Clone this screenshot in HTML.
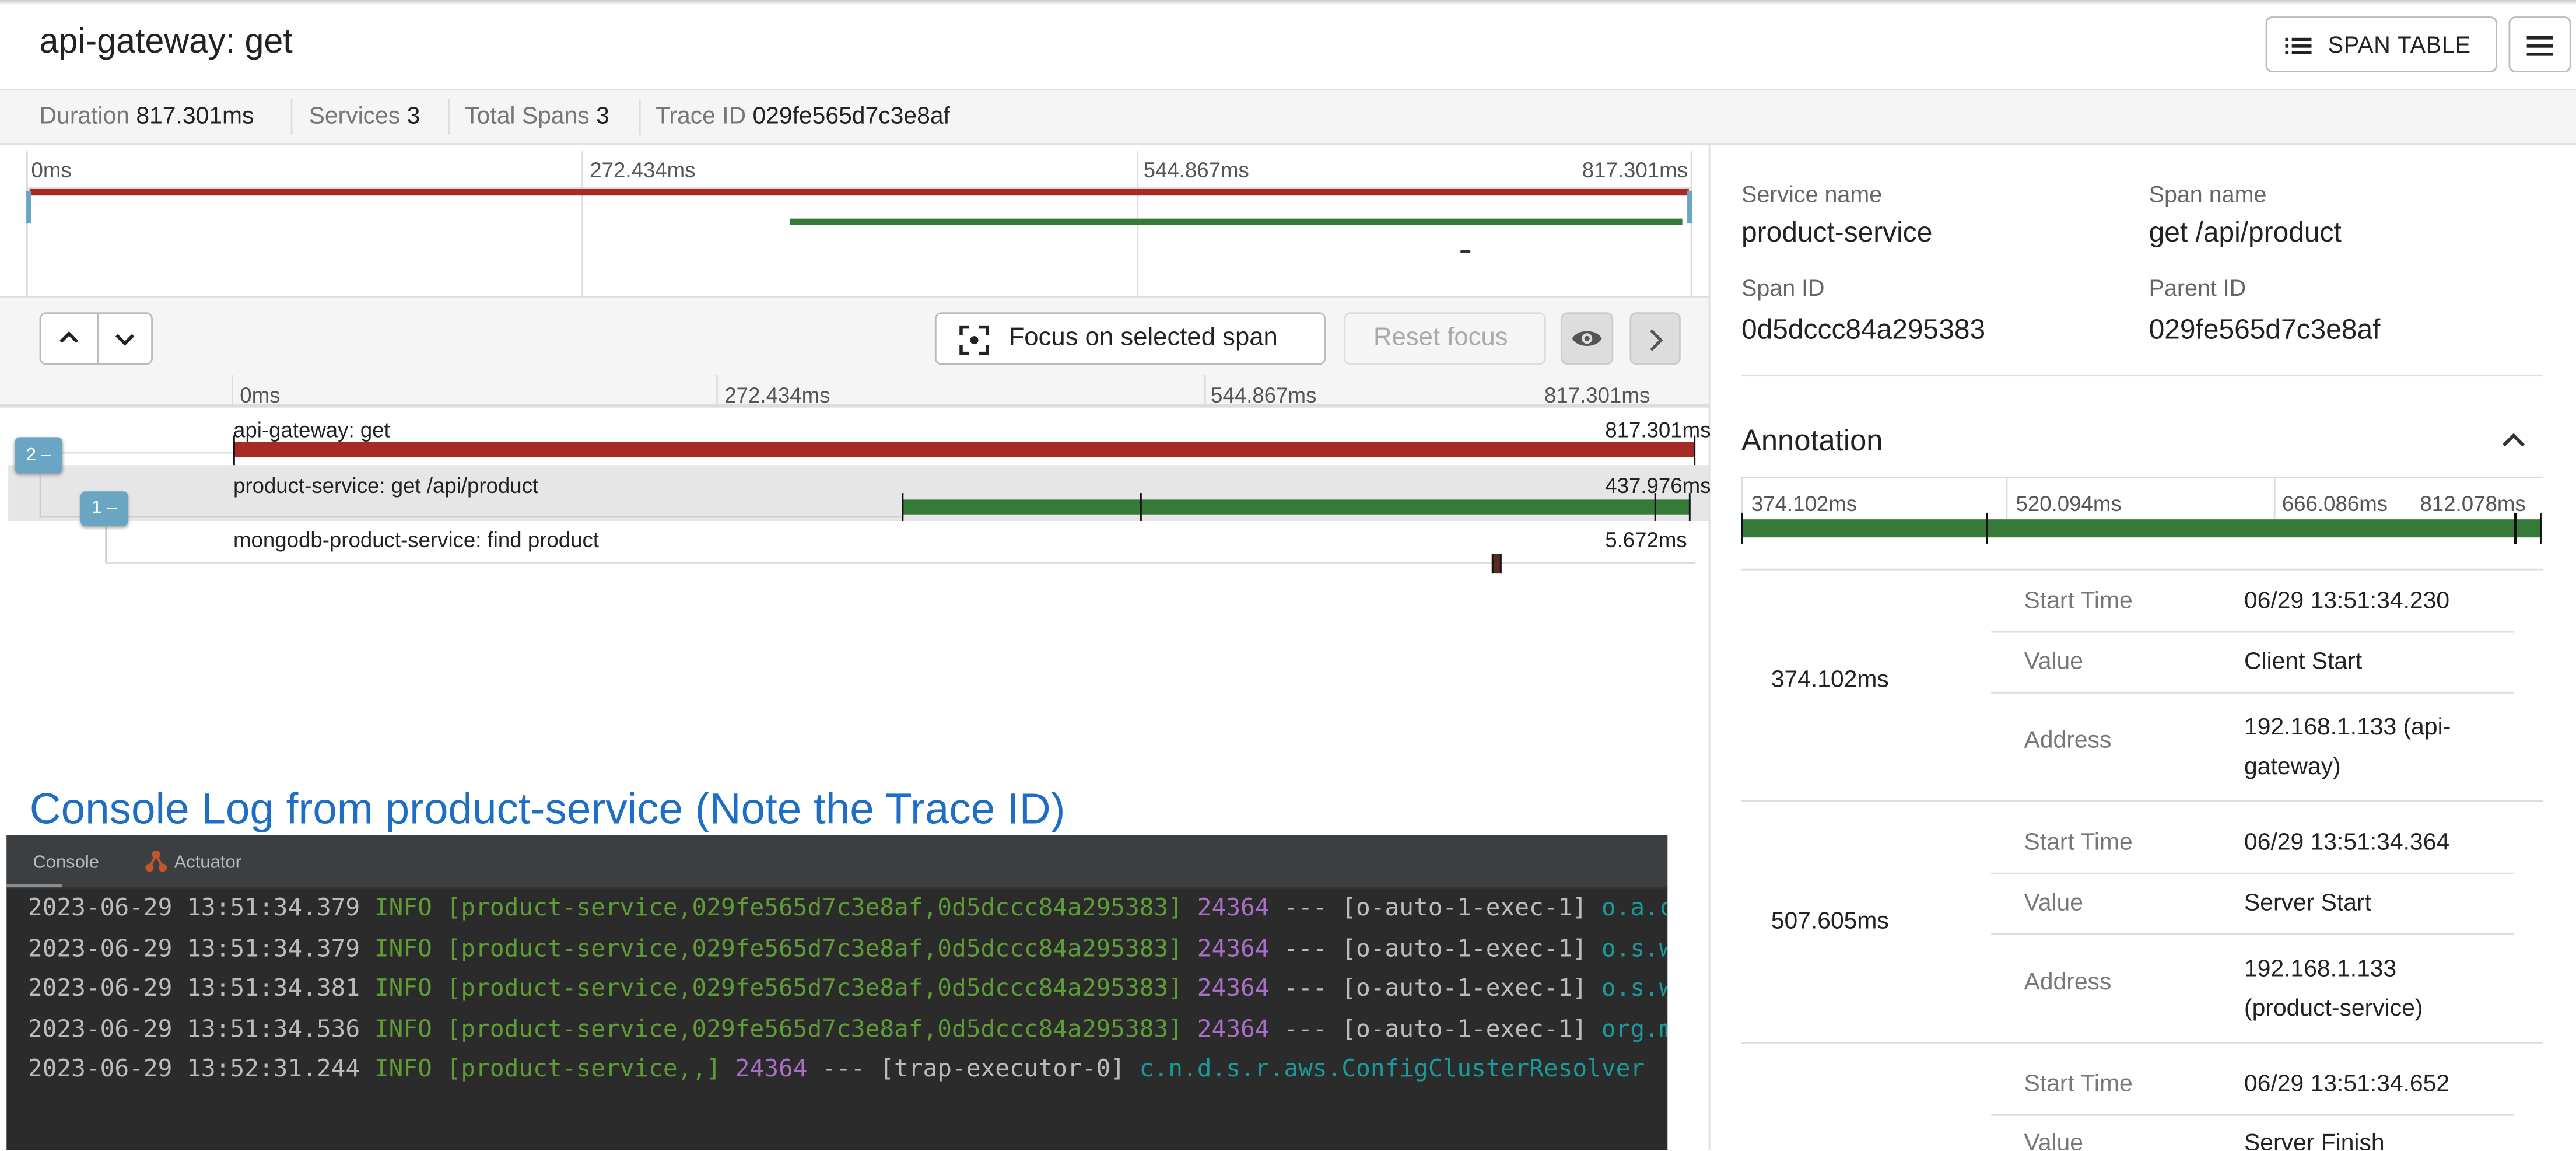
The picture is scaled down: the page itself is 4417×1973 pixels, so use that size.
<!DOCTYPE html>
<html><head><meta charset="utf-8"><style>
html,body{margin:0;padding:0;width:4417px;height:1973px;overflow:hidden;background:#fff}
#s{position:absolute;left:0;top:0;width:1568px;height:700px;transform:scale(2.8170);transform-origin:0 0;font-family:"Liberation Sans",sans-serif;color:#222;overflow:hidden}
.a{position:absolute;white-space:nowrap}
.g{color:#777}
.btn{position:absolute;border:1px solid #bbb;border-radius:4px;background:#fff;box-sizing:border-box}
.mono{font-family:"DejaVu Sans Mono","Liberation Mono",monospace;font-size:14.6px;white-space:pre}
</style></head><body><div id="s">
<div class="a" style="left:0;top:0;width:1568px;height:3px;background:linear-gradient(#ccc,#fff)"></div>
<div class="a" style="left:24px;top:14px;font-size:21px">api-gateway: get</div>
<div class="btn" style="left:1379px;top:10px;width:141px;height:34px;font-size:14px;letter-spacing:.3px">
 <svg class="a" style="left:11px;top:11px" width="16" height="12"><g fill="#222"><rect x="0" y="1" width="2" height="2"/><rect x="4" y="1" width="12" height="2"/><rect x="0" y="5" width="2" height="2"/><rect x="4" y="5" width="12" height="2"/><rect x="0" y="9" width="2" height="2"/><rect x="4" y="9" width="12" height="2"/></g></svg>
 <span class="a" style="left:37px;top:8px">SPAN TABLE</span></div>
<div class="btn" style="left:1527px;top:10px;width:38px;height:34px">
 <svg class="a" style="left:10px;top:10px" width="16" height="13"><g fill="#222"><rect y="1" width="16" height="2"/><rect y="6" width="16" height="2"/><rect y="11" width="16" height="2"/></g></svg></div>
<div class="a" style="left:0;top:54px;width:1568px;height:34px;background:#f5f5f5;border-top:1px solid #ddd;border-bottom:1px solid #ddd;box-sizing:border-box;font-size:14.5px">
 <span class="a" style="left:24px;top:8px"><span class="g">Duration</span> 817.301ms</span>
 <div class="a" style="left:177px;top:5px;height:22px;border-left:1px solid #ddd"></div>
 <span class="a" style="left:188px;top:8px"><span class="g">Services</span> 3</span>
 <div class="a" style="left:273px;top:5px;height:22px;border-left:1px solid #ddd"></div>
 <span class="a" style="left:283px;top:8px"><span class="g">Total Spans</span> 3</span>
 <div class="a" style="left:389px;top:5px;height:22px;border-left:1px solid #ddd"></div>
 <span class="a" style="left:399px;top:8px"><span class="g">Trace ID</span> 029fe565d7c3e8af</span>
</div>
<div class="a" style="left:1040px;top:88px;width:1px;height:612px;background:#ddd"></div>
<div class="a" style="left:16px;top:92px;width:1014px;height:88px;font-size:13px;color:#555">
 <span class="a" style="left:3px;top:4px">0ms</span><span class="a" style="left:343px;top:4px">272.434ms</span><span class="a" style="left:680px;top:4px">544.867ms</span><span class="a" style="left:947px;top:4px">817.301ms</span>
 <div class="a" style="left:0;top:0;width:1px;height:88px;background:#ddd"></div>
 <div class="a" style="left:338px;top:0;width:1px;height:88px;background:#ddd"></div>
 <div class="a" style="left:676px;top:0;width:1px;height:88px;background:#ddd"></div>
 <div class="a" style="left:1013px;top:0;width:1px;height:88px;background:#ddd"></div>
 <div class="a" style="left:0;top:22px;width:1014px;height:1px;background:#ddd"></div>
 <div class="a" style="left:2px;top:23px;width:1010px;height:4px;background:#a62b26"></div>
 <div class="a" style="left:465px;top:41px;width:543px;height:4px;background:#357a38"></div>
 <div class="a" style="left:873px;top:60px;width:6px;height:2px;background:#333"></div>
 <div class="a" style="left:0;top:24px;width:3px;height:20px;background:#6aa5c4"></div>
 <div class="a" style="left:1011px;top:24px;width:3px;height:20px;background:#6aa5c4"></div>
</div>
<div class="a" style="left:0;top:180px;width:1040px;height:68px;background:#f5f5f5;border-top:1px solid #ddd;border-bottom:2px solid #ddd;box-sizing:border-box"></div>
<div class="btn" style="left:24px;top:190px;width:69px;height:32px">
 <div class="a" style="left:34px;top:0;width:1px;height:30px;background:#bbb"></div>
 <svg class="a" style="left:11px;top:10px" width="12" height="10"><path d="M1 7 L6 2 L11 7" stroke="#222" stroke-width="2" fill="none"/></svg>
 <svg class="a" style="left:45px;top:10px" width="12" height="10"><path d="M1 3 L6 8 L11 3" stroke="#222" stroke-width="2" fill="none"/></svg></div>
<div class="btn" style="left:569px;top:190px;width:238px;height:32px;font-size:15.5px">
 <svg class="a" style="left:14px;top:7px" width="18" height="18"><g stroke="#222" stroke-width="2" fill="none"><path d="M1 6V1H6M12 1H17V6M17 12V17H12M6 17H1V12"/></g><circle cx="9" cy="9" r="2.5" fill="#222"/></svg>
 <span class="a" style="left:44px;top:6px">Focus on selected span</span></div>
<div class="btn" style="left:818px;top:190px;width:123px;height:32px;border-color:#ddd;background:#f5f5f5;color:#aaa;font-size:15.5px"><span class="a" style="left:17px;top:6px">Reset focus</span></div>
<div class="btn" style="left:950px;top:190px;width:32px;height:32px;background:#ddd;border-color:#ccc">
 <svg class="a" style="left:5px;top:8px" width="20" height="14"><path d="M1 7C4 1 16 1 19 7C16 13 4 13 1 7Z" fill="#555"/><circle cx="10" cy="7" r="3.2" fill="#ddd"/><circle cx="10" cy="7" r="1.6" fill="#555"/></svg></div>
<div class="btn" style="left:992px;top:190px;width:31px;height:32px;background:#ddd;border-color:#ccc">
 <svg class="a" style="left:10px;top:9px" width="10" height="14"><path d="M2 1L8 7L2 13" stroke="#555" stroke-width="1.8" fill="none"/></svg></div>
<div class="a" style="left:0;top:228px;width:1040px;font-size:13px;color:#555">
 <span class="a" style="left:146px;top:5px">0ms</span><span class="a" style="left:441px;top:5px">272.434ms</span><span class="a" style="left:737px;top:5px">544.867ms</span><span class="a" style="left:940px;top:5px">817.301ms</span>
 <div class="a" style="left:141px;top:0;width:1px;height:20px;background:#ddd"></div><div class="a" style="left:436px;top:0;width:1px;height:20px;background:#ddd"></div><div class="a" style="left:733px;top:0;width:1px;height:20px;background:#ddd"></div>
</div>
<div class="a" style="left:5px;top:283px;width:1035px;height:34px;background:#e6e6e6"></div>
<div class="a" style="left:20px;top:275px;width:122px;height:1px;background:#ddd"></div>
<div class="a" style="left:24px;top:285px;width:1px;height:30px;background:#ccc"></div>
<div class="a" style="left:24px;top:314px;width:525px;height:1px;background:#ccc"></div>
<div class="a" style="left:64px;top:318px;width:1px;height:25px;background:#ccc"></div>
<div class="a" style="left:64px;top:342px;width:968px;height:1px;background:#ddd"></div>
<div class="a" style="left:142px;top:254px;font-size:13px">api-gateway: get</div>
<div class="a" style="left:977px;top:254px;font-size:13px">817.301ms</div>
<div class="a" style="left:142px;top:269px;width:889px;height:9px;background:#a62b26"></div>
<div class="a" style="left:142px;top:265px;width:1px;height:18px;background:#111"></div>
<div class="a" style="left:1031px;top:265px;width:1px;height:18px;background:#111"></div>
<div class="a" style="left:142px;top:288px;font-size:13px">product-service: get /api/product</div>
<div class="a" style="left:977px;top:288px;font-size:13px">437.976ms</div>
<div class="a" style="left:549px;top:304px;width:480px;height:9px;background:#357a38"></div>
<div class="a" style="left:549px;top:300px;width:1px;height:17px;background:#111"></div>
<div class="a" style="left:694px;top:300px;width:1px;height:17px;background:#111"></div>
<div class="a" style="left:1007px;top:300px;width:1px;height:17px;background:#111"></div>
<div class="a" style="left:1028px;top:300px;width:1px;height:17px;background:#111"></div>
<div class="a" style="left:142px;top:321px;font-size:13px">mongodb-product-service: find product</div>
<div class="a" style="left:977px;top:321px;font-size:13px">5.672ms</div>
<div class="a" style="left:908px;top:337px;width:6px;height:12px;background:#5a2a20;border-left:1px solid #111;border-right:1px solid #111;box-sizing:border-box"></div>
<div class="a" style="left:9px;top:266px;width:29px;height:22px;background:#6aa5c4;border-radius:3px;color:#fff;font-size:11px;text-align:center;line-height:22px;box-shadow:0 1px 2px #999">2 –</div>
<div class="a" style="left:49px;top:299px;width:29px;height:21px;background:#6aa5c4;border-radius:3px;color:#fff;font-size:11px;text-align:center;line-height:21px;box-shadow:0 1px 2px #999">1 –</div>
<div class="a" style="left:18px;top:477px;font-size:26.5px;color:#1e6ec6">Console Log from product-service (Note the Trace ID)</div>
<div class="a" style="left:4px;top:508px;width:1011px;height:192px;background:#2b2b2b;overflow:hidden">
 <div class="a" style="left:0;top:0;width:1011px;height:32px;background:#3c3f41;border-bottom:1px solid #333"></div>
 <div class="a" style="left:0;top:30px;width:34px;height:2px;background:#8a8d90"></div>
 <span class="a" style="left:16px;top:11px;font-size:11px;color:#bbb">Console</span>
 <svg class="a" style="left:84px;top:9px" width="14" height="14"><g fill="#c0562a"><circle cx="7" cy="3" r="2.5"/><circle cx="3" cy="11" r="2.5"/><circle cx="11" cy="11" r="2.5"/></g><path d="M7 3L3 11M7 3L11 11" stroke="#c0562a" stroke-width="1.5"/></svg>
 <span class="a" style="left:102px;top:11px;font-size:11px;color:#bbb">Actuator</span>
 <div class="a mono" style="left:13px;top:33px;line-height:24.5px;color:#bbb"><div>2023-06-29 13:51:34.379 <span style="color:#5e9c35">INFO [product-service,029fe565d7c3e8af,0d5dccc84a295383]</span> <span style="color:#a96ec6">24364</span> --- [o-auto-1-exec-1] <span style="color:#1a9a9a">o.a.c</span></div><div>2023-06-29 13:51:34.379 <span style="color:#5e9c35">INFO [product-service,029fe565d7c3e8af,0d5dccc84a295383]</span> <span style="color:#a96ec6">24364</span> --- [o-auto-1-exec-1] <span style="color:#1a9a9a">o.s.w</span></div><div>2023-06-29 13:51:34.381 <span style="color:#5e9c35">INFO [product-service,029fe565d7c3e8af,0d5dccc84a295383]</span> <span style="color:#a96ec6">24364</span> --- [o-auto-1-exec-1] <span style="color:#1a9a9a">o.s.w</span></div><div>2023-06-29 13:51:34.536 <span style="color:#5e9c35">INFO [product-service,029fe565d7c3e8af,0d5dccc84a295383]</span> <span style="color:#a96ec6">24364</span> --- [o-auto-1-exec-1] <span style="color:#1a9a9a">org.m</span></div><div>2023-06-29 13:52:31.244 <span style="color:#5e9c35">INFO [product-service,,]</span> <span style="color:#a96ec6">24364</span> --- [trap-executor-0] <span style="color:#1a9a9a">c.n.d.s.r.aws.ConfigClusterResolver</span></div></div>
</div>
<div class="a" style="left:1060px;top:110px;font-size:14px;color:#666">Service name</div>
<div class="a" style="left:1308px;top:110px;font-size:14px;color:#666">Span name</div>
<div class="a" style="left:1060px;top:132px;font-size:17px">product-service</div>
<div class="a" style="left:1308px;top:132px;font-size:17px">get /api/product</div>
<div class="a" style="left:1060px;top:167px;font-size:14px;color:#666">Span ID</div>
<div class="a" style="left:1308px;top:167px;font-size:14px;color:#666">Parent ID</div>
<div class="a" style="left:1060px;top:191px;font-size:17px">0d5dccc84a295383</div>
<div class="a" style="left:1308px;top:191px;font-size:17px">029fe565d7c3e8af</div>
<div class="a" style="left:1060px;top:228px;width:488px;height:1px;background:#ddd"></div>
<div class="a" style="left:1060px;top:258px;font-size:18px">Annotation</div>
<svg class="a" style="left:1523px;top:263px" width="14" height="10"><path d="M1 8L7 2L13 8" stroke="#333" stroke-width="2" fill="none"/></svg>
<div class="a" style="left:1060px;top:290px;width:488px;height:1px;background:#ddd"></div>
<div class="a" style="left:1060px;top:290px;width:1px;height:26px;background:#ddd"></div>
<div class="a" style="left:1221px;top:290px;width:1px;height:26px;background:#ddd"></div>
<div class="a" style="left:1384px;top:290px;width:1px;height:26px;background:#ddd"></div>
<div class="a" style="left:1066px;top:299px;font-size:13px;color:#555">374.102ms</div>
<div class="a" style="left:1227px;top:299px;font-size:13px;color:#555">520.094ms</div>
<div class="a" style="left:1389px;top:299px;font-size:13px;color:#555">666.086ms</div>
<div class="a" style="left:1473px;top:299px;font-size:13px;color:#555">812.078ms</div>
<div class="a" style="left:1060px;top:316px;width:487px;height:11px;background:#357a38"></div>
<div class="a" style="left:1060px;top:312px;width:1px;height:19px;background:#111"></div>
<div class="a" style="left:1209px;top:312px;width:1px;height:19px;background:#111"></div>
<div class="a" style="left:1530px;top:312px;width:2px;height:19px;background:#111"></div>
<div class="a" style="left:1546px;top:312px;width:1px;height:19px;background:#111"></div>
<div class="a" style="left:1060px;top:346px;width:488px;height:354px;overflow:hidden;font-size:14.5px">
 <div class="a" style="left:0;top:0;width:488px;height:1px;background:#ddd"></div>
 <div class="a" style="left:18px;top:60px">374.102ms</div>
 <div class="a" style="left:172px;top:12px;color:#777">Start Time</div><div class="a" style="left:306px;top:12px">06/29 13:51:34.230</div>
 <div class="a" style="left:152px;top:38px;width:318px;height:1px;background:#ddd"></div>
 <div class="a" style="left:172px;top:49px;color:#777">Value</div><div class="a" style="left:306px;top:49px">Client Start</div>
 <div class="a" style="left:152px;top:75px;width:318px;height:1px;background:#ddd"></div>
 <div class="a" style="left:172px;top:97px;color:#777">Address</div><div class="a" style="left:306px;top:85px;line-height:24px">192.168.1.133 (api-<br>gateway)</div>
 <div class="a" style="left:0;top:141px;width:488px;height:1px;background:#ddd"></div>
 <div class="a" style="left:18px;top:207px">507.605ms</div>
 <div class="a" style="left:172px;top:159px;color:#777">Start Time</div><div class="a" style="left:306px;top:159px">06/29 13:51:34.364</div>
 <div class="a" style="left:152px;top:185px;width:318px;height:1px;background:#ddd"></div>
 <div class="a" style="left:172px;top:196px;color:#777">Value</div><div class="a" style="left:306px;top:196px">Server Start</div>
 <div class="a" style="left:152px;top:222px;width:318px;height:1px;background:#ddd"></div>
 <div class="a" style="left:172px;top:244px;color:#777">Address</div><div class="a" style="left:306px;top:232px;line-height:24px">192.168.1.133<br>(product-service)</div>
 <div class="a" style="left:0;top:288px;width:488px;height:1px;background:#ddd"></div>
 <div class="a" style="left:172px;top:306px;color:#777">Start Time</div><div class="a" style="left:306px;top:306px">06/29 13:51:34.652</div>
 <div class="a" style="left:152px;top:332px;width:318px;height:1px;background:#ddd"></div>
 <div class="a" style="left:172px;top:342px;color:#777">Value</div><div class="a" style="left:306px;top:342px">Server Finish</div>
</div>
</div></body></html>
